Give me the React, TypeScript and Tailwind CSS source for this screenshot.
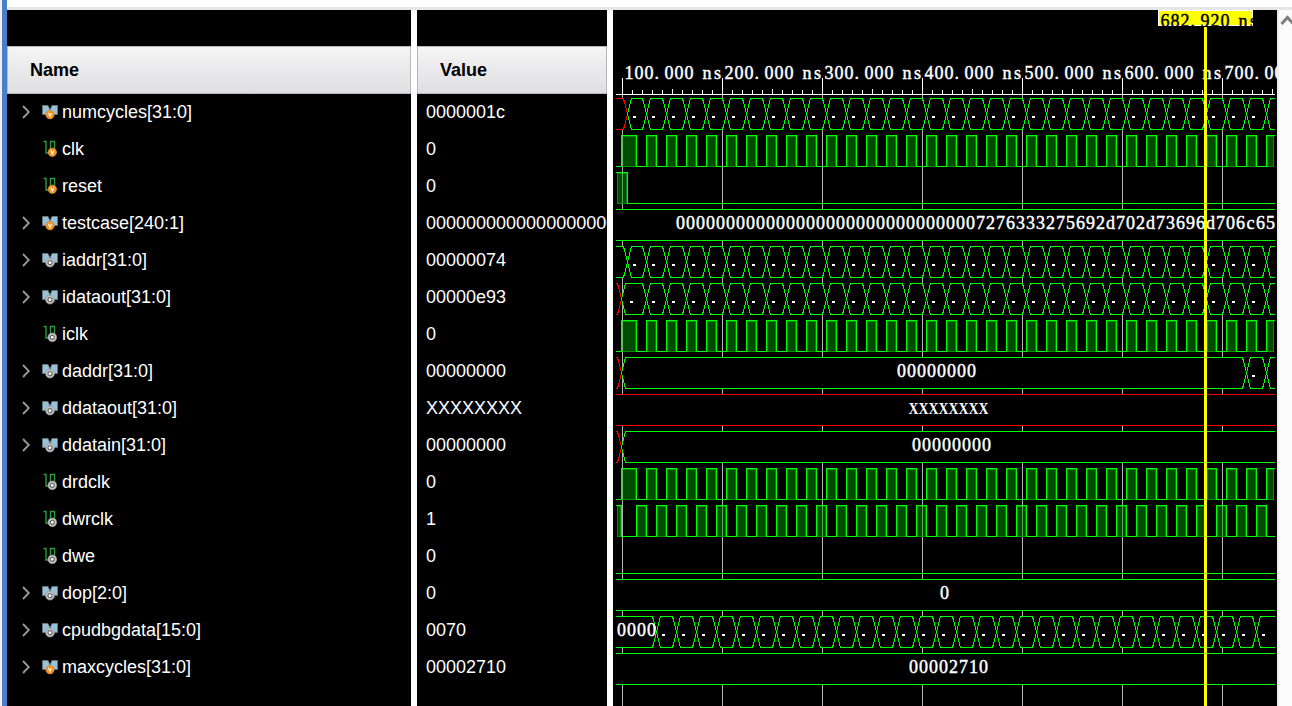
import React from "react";

type Kind = "bus" | "bit";
type Signal = { name: string; value: string; kind: Kind; sim: boolean };

const signals: Signal[] = [
  { name: "numcycles[31:0]", value: "0000001c", kind: "bus", sim: true },
  { name: "clk", value: "0", kind: "bit", sim: true },
  { name: "reset", value: "0", kind: "bit", sim: true },
  { name: "testcase[240:1]", value: "0000000000000000000", kind: "bus", sim: true },
  { name: "iaddr[31:0]", value: "00000074", kind: "bus", sim: false },
  { name: "idataout[31:0]", value: "00000e93", kind: "bus", sim: false },
  { name: "iclk", value: "0", kind: "bit", sim: false },
  { name: "daddr[31:0]", value: "00000000", kind: "bus", sim: false },
  { name: "ddataout[31:0]", value: "XXXXXXXX", kind: "bus", sim: false },
  { name: "ddatain[31:0]", value: "00000000", kind: "bus", sim: false },
  { name: "drdclk", value: "0", kind: "bit", sim: false },
  { name: "dwrclk", value: "1", kind: "bit", sim: false },
  { name: "dwe", value: "0", kind: "bit", sim: false },
  { name: "dop[2:0]", value: "0", kind: "bus", sim: false },
  { name: "cpudbgdata[15:0]", value: "0070", kind: "bus", sim: false },
  { name: "maxcycles[31:0]", value: "00002710", kind: "bus", sim: true },
];

const GREEN = "#00ff00";
const RED = "#ff0000";
const LEFT = 616;
const RIGHT = 1275;
const rowTop = (row: number) => 98 + row * 37;
const range = (from: number, to: number, step: number) => {
  const out: number[] = [];
  for (let v = from; v <= to; v += step) out.push(v);
  return out;
};

function Badge({ sim, cx, cy }: { sim: boolean; cx: number; cy: number }) {
  return sim ? (
    <>
      <circle cx={cx} cy={cy} r="4.2" fill="#f7941d" stroke="#d08a3a" strokeWidth="0.7" />
      <path d={`M${cx - 1.5} ${cy - 1.8}L${cx} ${cy + 1.7}L${cx + 1.5} ${cy - 1.8}`} fill="none" stroke="#fff" strokeWidth="1.1" />
    </>
  ) : (
    <>
      <circle cx={cx} cy={cy} r="4.4" fill="#c6c6c6" stroke="#8c8c8c" strokeWidth="0.6" />
      <circle cx={cx} cy={cy} r="2" fill="#fff" stroke="#6b6b6b" strokeWidth="1.2" />
    </>
  );
}

function SignalIcon({ kind, sim }: { kind: Kind; sim: boolean }) {
  return (
    <svg width="18" height="19" viewBox="0 0 18 19" className="shrink-0">
      {kind === "bus" ? (
        <>
          <path d="M1.500 3.500H7L9 8L11 3.500H16.500V12.500H1.500Z" fill="#97c1d8" stroke="#6f7a80" strokeWidth="0.8" />
          <Badge sim={sim} cx={9} cy={12.700} />
        </>
      ) : (
        <>
          <path d="M2.500 2.500H5V14H9.500V2.500H13.500V12" fill="none" stroke="#2f9a40" strokeWidth="1.4" />
          <Badge sim={sim} cx={11.300} cy={13.300} />
        </>
      )}
    </svg>
  );
}

function Label({ x, row, text }: { x: number; row: number; text: string }) {
  return <WaveText x={x} y={rowTop(row) + 20} text={text} />;
}

const glyphShift: Record<string, number> = { n: -2, c: 0.5, e: 0.5, s: -0.5 };

function WaveText({ x, y, text, fill = "#fff" }: { x: number; y: number; text: string; fill?: string }) {
  if (text.startsWith("X")) {
    return (
      <text x={x} y={y} fill={fill} fontSize="16.5" fontWeight="bold" textLength={text.length * 10} lengthAdjust="spacingAndGlyphs" fontFamily="Liberation Serif, serif">
        {text}
      </text>
    );
  }
  return (
    <text
      x={text.split("").map((c, i) => x + i * 10 + (glyphShift[c] ?? 0)).join(" ")}
      y={y}
      fill={fill}
      stroke={fill}
      strokeWidth="0.45"
      fontSize="18"
      fontFamily="Liberation Serif, serif"
    >
      {text}
    </text>
  );
}

function BusSegment({ row, a, b, color = GREEN }: { row: number; a: number; b: number; color?: string }) {
  const t = rowTop(row) + 0.5;
  const m = t + 15.5;
  const l = t + 31;
  const openLeft = a <= LEFT;
  const openRight = b >= RIGHT;
  const start = openLeft ? LEFT : a + 4.5;
  const end = openRight ? RIGHT : b - 3.5;
  const right = openRight ? `L${end} ${l}` : `L${b + 0.5} ${m}L${end} ${l}`;
  const left = openLeft ? "" : `L${a + 0.5} ${m}L${start} ${t}`;
  return (
    <>
      <path d={`M${start} ${t}L${end} ${t}${right}L${start} ${l}${left}Z`} fill="#000" />
      <path d={`M${start} ${t}L${end} ${t}${openRight ? `M${end} ${l}` : right}L${start} ${l}${left}`} fill="none" stroke={color} />
    </>
  );
}

function Bus({ row, cuts, firstRed = false }: { row: number; cuts: number[]; firstRed?: boolean }) {
  const edges = [LEFT, ...cuts, RIGHT];
  return (
    <g>
      {edges.slice(0, -1).map((a, i) => (
        <BusSegment key={a} row={row} a={a} b={edges[i + 1]} color={firstRed && i === 0 ? RED : GREEN} />
      ))}
      {edges.slice(1, -1).map((a, i) => {
        const width = edges[i + 2] - a;
        if (width < 16 || width > 30) return null;
        return <rect key={a} x={width > 20 ? a + 9 : a + 6} y={rowTop(row) + 18} width="3" height="2" fill="#fff" />;
      })}
    </g>
  );
}

function Clock({ row, highs }: { row: number; highs: [number, number][] }) {
  const t = rowTop(row);
  let d = "";
  let x = LEFT;
  highs.forEach(([a, b]) => {
    if (a > LEFT) d += `M${x} ${t + 31.5}H${a + 0.5}V${t + 0.5}`;
    else d += `M${a} ${t + 0.5}`;
    d += `H${Math.min(b + 0.5, RIGHT)}`;
    if (b < RIGHT) d += `V${t + 32}`;
    x = b;
  });
  if (x < RIGHT) d += `M${x} ${t + 31.5}H${RIGHT}`;
  return (
    <g>
      {highs.map(([a, b]) => {
        const l = a <= LEFT ? 617 : a + 1;
        const r = b >= RIGHT ? 1274 : b;
        return <rect key={a} x={l + 0.5} y={t + 1.5} width={r - l - 1} height={30} fill="#004b00" stroke="#008c00" />;
      })}
      <path d={d} fill="none" stroke={GREEN} />
    </g>
  );
}

function Waveforms() {
  const regular = range(646, 1266, 20);
  const clk: [number, number][] = [[621, 636], ...regular.map((x): [number, number] => [x, x + 10])];
  const dwr: [number, number][] = [[LEFT, 621], ...range(636, 1256, 20).map((x): [number, number] => [x, x + 10])];
  const grid = range(622, 1222, 100);
  return (
    <svg width="664" height="696" viewBox="613 10 664 696" shapeRendering="crispEdges" className="block">
      {grid.map((x) => (
        <rect key={x} x={x} y="95" width="1" height="611" fill="#b4b4b4" />
      ))}
      <Clock row={1} highs={clk} />
      <Clock row={2} highs={[[LEFT, 627]]} />
      <Clock row={6} highs={clk} />
      <Clock row={10} highs={clk} />
      <Clock row={11} highs={dwr} />
      <Clock row={12} highs={[]} />
      {[1, 2, 6, 10].map((row) => (
        <rect key={row} x="622" y={rowTop(row) + 1} width="1" height="30" fill="#b4ffb4" fillOpacity="0.5" />
      ))}
      {grid.slice(1).map((x) => (
        <rect key={x} x={x} y={rowTop(11) + 1} width="1" height="30" fill="#b4ffb4" fillOpacity="0.5" />
      ))}
      <Bus row={0} cuts={[627, ...regular]} firstRed />
      <Bus row={3} cuts={[]} />
      <Bus row={4} cuts={[627, ...regular]} />
      <Bus row={5} cuts={[621, ...regular]} firstRed />
      <Bus row={7} cuts={[621, 1246, 1266]} firstRed />
      <Bus row={8} cuts={[]} firstRed />
      <Bus row={9} cuts={[621]} firstRed />
      <Bus row={13} cuts={[]} />
      <Bus row={14} cuts={range(656, 1256, 20)} />
      <Bus row={15} cuts={[]} />
      <Label row={3} x={676} text={"0".repeat(30) + "7276333275692d702d73696d706c65"} />
      <Label row={7} x={897} text="00000000" />
      <Label row={8} x={908.500} text="XXXXXXXX" />
      <Label row={9} x={912} text="00000000" />
      <Label row={13} x={940} text="0" />
      <Label row={14} x={617} text="0000" />
      <Label row={15} x={909} text="00002710" />
      <rect x={LEFT} y="94" width={RIGHT - LEFT} height="1" fill="#fff" />
      {range(622, 1272, 10).map((x) => {
        const top = (x - 622) % 100 === 0 ? 78 : (x - 622) % 50 === 0 ? 89 : 90;
        return <rect key={x} x={x} y={top} width="1" height={94 - top} fill="#fff" />;
      })}
      {grid.map((x, i) => (
        <WaveText key={x} x={x + 2.5} y={79} text={`${i + 1}00.000 ns`} />
      ))}
      <rect x="1158" y="10" width="95" height="16" fill="#fff" />
      <rect x="1159" y="11" width="93" height="14" fill="#ff0" />
      <clipPath id="cursor-label">
        <rect x="1159" y="11" width="94" height="15" />
      </clipPath>
      <g clipPath="url(#cursor-label)">
        <WaveText x={1160.500} y={27} text="682.920 ns" fill="#000" />
      </g>
      <rect x="1204" y="27" width="3" height="679" fill="#ff0" />
    </svg>
  );
}

function Header({ title }: { title: string }) {
  return (
    <div className="mt-9 -mb-px flex h-12 shrink-0 items-center border border-[#b9b9bb] bg-linear-to-b from-[#f5f5f5] to-[#dfdfe2] pl-[22px] text-lg font-bold text-black">
      {title}
    </div>
  );
}

export default function App() {
  return (
    <div className="flex h-[706px] w-[1292px] overflow-hidden bg-white font-['Liberation_Sans',Arial,sans-serif] text-lg text-white">
      <div className="w-[7px] shrink-0 border-l-2 border-[#f0f0f0] bg-[#4a7ecb]" />
      <div className="flex min-w-0 flex-1 flex-col">
        <div className="h-2.5 shrink-0 border-b-[3px] border-[#e6e6e6]" />
        <div className="flex min-h-0 flex-1">
          <div className="flex w-[404px] shrink-0 flex-col overflow-hidden bg-black">
            <Header title="Name" />
            {signals.map((s) => (
              <div key={s.name} className="flex h-[37px] shrink-0 items-center pl-3.5">
                <span className="flex w-5 shrink-0">
                  {s.kind === "bus" && (
                    <svg width="10" height="15" viewBox="0 0 10 15">
                      <path d="M2 2L7.800 8L2 14" fill="none" stroke="#999" strokeWidth="1.8" />
                    </svg>
                  )}
                </span>
                <SignalIcon kind={s.kind} sim={s.sim} />
                <span className="ml-[3px] whitespace-nowrap">{s.name}</span>
              </div>
            ))}
          </div>
          <div className="ml-1.5 flex w-[190px] shrink-0 flex-col overflow-hidden bg-black">
            <Header title="Value" />
            {signals.map((s) => (
              <div key={s.name} className="flex h-[37px] shrink-0 items-center pl-[9px] whitespace-nowrap">
                {s.value}
              </div>
            ))}
          </div>
          <div className="ml-1.5 w-[664px] shrink-0 overflow-hidden bg-black">
            <Waveforms />
          </div>
          <div className="w-[15px] shrink-0 overflow-hidden border-l-2 border-[#ececec] bg-[#fbfbfb]">
            <svg width="13" height="30" viewBox="1279 10 13 30">
              <path d="M1281.500 24L1287.500 17.500L1293.500 24" fill="none" stroke="#7d7d7d" strokeWidth="3" />
            </svg>
          </div>
        </div>
      </div>
    </div>
  );
}
